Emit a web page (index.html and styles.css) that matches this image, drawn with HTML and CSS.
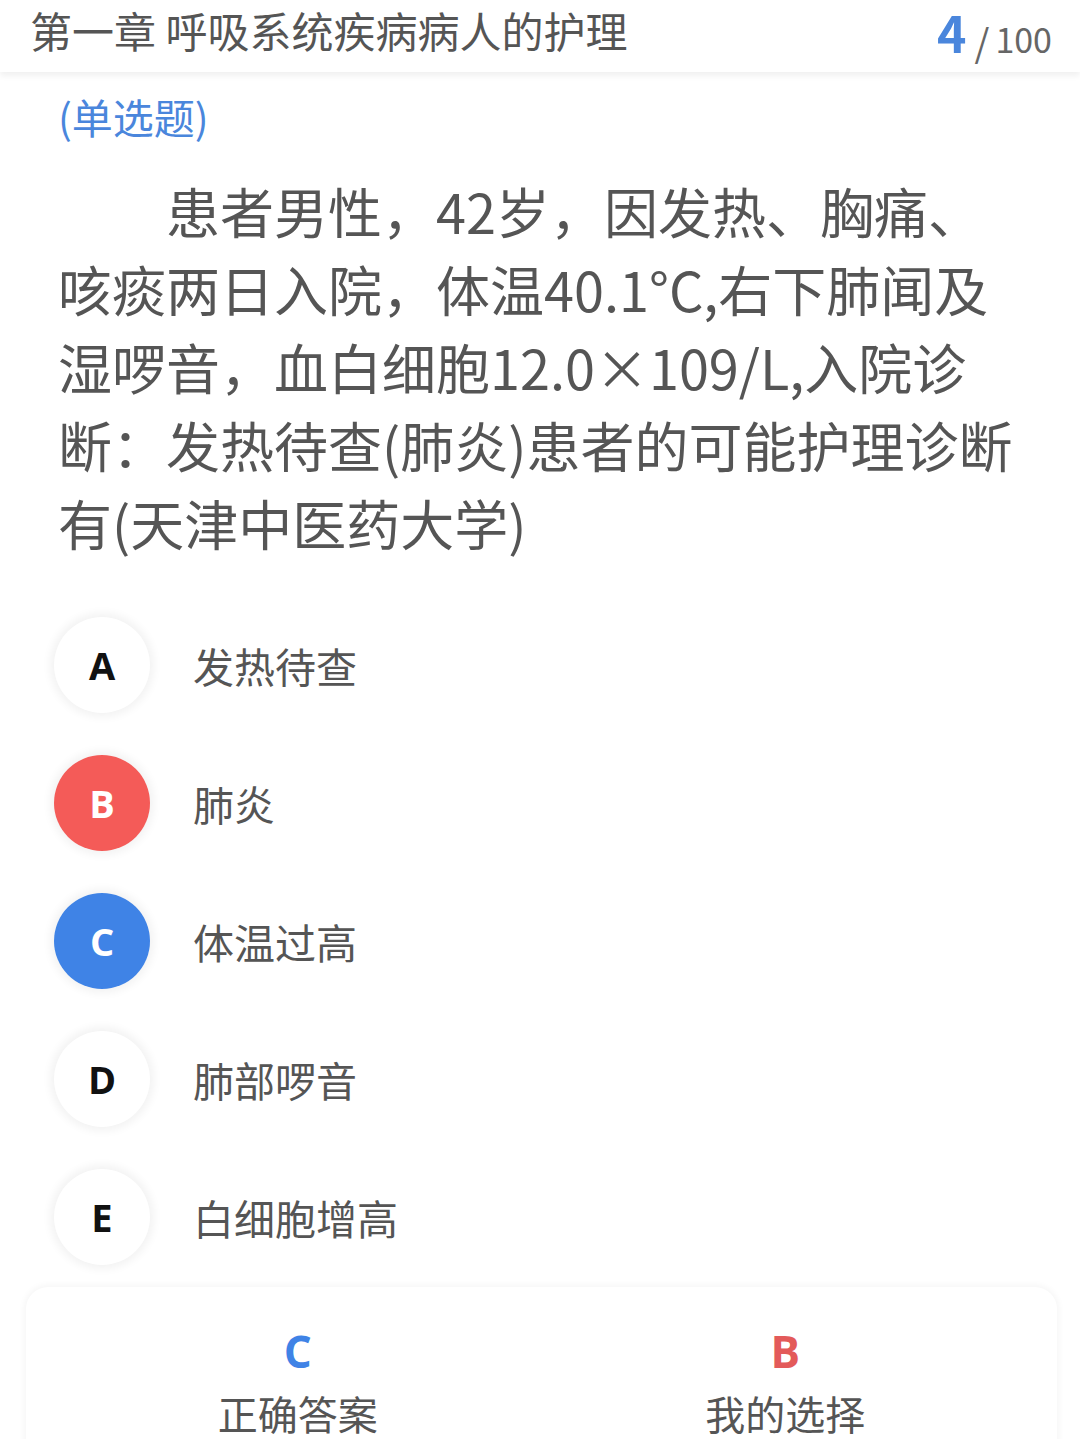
FILE: index.html
```html
<!DOCTYPE html>
<html lang="zh-CN">
<head>
<meta charset="utf-8">
<title>第一章 呼吸系统疾病病人的护理</title>
<link rel="stylesheet" href="styles.css">
</head>
<body>
<header class="topbar">
  <h1 class="chapter">第一章 呼吸系统疾病病人的护理</h1>
  <div class="progress"><span class="current">4</span><span class="sep">/</span><span class="total">100</span></div>
</header>
<main class="content">
  <div class="qtype">(单选题)</div>
  <p class="question">患者男性，42岁，因发热、胸痛、咳痰两日入院，体温40.1°C,右下肺闻及湿啰音，血白细胞12.0×109/L,入院诊断：发热待查(肺炎)患者的可能护理诊断有(天津中医药大学)</p>
  <ul class="options">
    <li class="option"><span class="badge">A</span><span class="opt-text">发热待查</span></li>
    <li class="option"><span class="badge badge-wrong">B</span><span class="opt-text">肺炎</span></li>
    <li class="option"><span class="badge badge-right">C</span><span class="opt-text">体温过高</span></li>
    <li class="option"><span class="badge">D</span><span class="opt-text">肺部啰音</span></li>
    <li class="option"><span class="badge">E</span><span class="opt-text">白细胞增高</span></li>
  </ul>
</main>
<section class="result">
  <div class="result-col">
    <div class="result-letter right">C</div>
    <div class="result-label">正确答案</div>
  </div>
  <div class="result-col">
    <div class="result-letter wrong">B</div>
    <div class="result-label">我的选择</div>
  </div>
</section>
</body>
</html>
```
FILE: styles.css
```css
html, body {
  margin: 0;
  padding: 0;
  background: #ffffff;
}
body {
  width: 1080px;
  height: 1439px;
  overflow: hidden;
  font-family: "Noto Sans CJK SC", "Noto Sans", sans-serif;
  color: #555555;
}
.topbar {
  height: 72px;
  display: flex;
  align-items: center;
  justify-content: space-between;
  padding: 0 28px 0 30px;
  box-sizing: border-box;
  box-shadow: 0 4px 6px rgba(0, 0, 0, 0.06);
  position: relative;
}
.chapter {
  margin: 0;
  font-size: 42px;
  font-weight: 400;
  color: #555555;
  line-height: 1.2;
  padding-bottom: 12px;
}
.progress {
  display: flex;
  align-items: baseline;
  line-height: 1.2;
  padding-bottom: 10px;
}
.current {
  font-size: 50px;
  font-weight: 700;
  color: #4a86dc;
}
.sep {
  font-size: 38px;
  color: #666;
  margin: 0 6px 0 8px;
  transform: translateY(4px);
}
.total {
  font-size: 34px;
  color: #666;
}
.content {
  padding: 0 58px 0 58px;
}
.qtype {
  margin-top: 16px;
  font-size: 41px;
  line-height: 56px;
  color: #4a86dc;
}
.question {
  margin: 28px 0 0 0;
  width: 970px;
  font-size: 54px;
  line-height: 78px;
  text-indent: 2em;
  color: #555555;
}
.options {
  list-style: none;
  margin: 55px 0 0 0;
  padding: 0;
  display: flex;
  flex-direction: column;
  gap: 42px;
}
.option {
  display: flex;
  align-items: center;
  height: 96px;
  margin-left: -4px;
}
.badge {
  width: 96px;
  height: 96px;
  border-radius: 50%;
  background: #ffffff;
  box-shadow: 0 0 8px 4px rgba(0, 0, 0, 0.05);
  display: flex;
  align-items: center;
  justify-content: center;
  font-family: "Open Sans", "Noto Sans", sans-serif;
  font-weight: 700;
  font-size: 38px;
  color: #111;
  flex: none;
}
.badge-wrong {
  background: #f45b58;
  color: #ffffff;
}
.badge-right {
  background: #3f83e6;
  color: #ffffff;
}
.opt-text {
  margin-left: 43px;
  font-size: 41px;
  color: #555555;
}
.result {
  position: absolute;
  left: 26px;
  top: 1287px;
  width: 1031px;
  height: 200px;
  box-sizing: border-box;
  border-radius: 22px;
  box-shadow: 0 0 6px 2px rgba(0, 0, 0, 0.04);
  display: grid;
  grid-template-columns: 1fr 1fr;
  padding: 0 28px;
  background: #fff;
}
.result-col {
  display: flex;
  flex-direction: column;
  align-items: center;
  padding-top: 36px;
}
.result-letter {
  font-family: "Open Sans", "Noto Sans", sans-serif;
  font-weight: 700;
  font-size: 44px;
  line-height: 56px;
}
.result-letter.right { color: #3f83e6; }
.result-letter.wrong { color: #e35a5a; }
.result-label {
  margin-top: 6px;
  font-size: 40px;
  line-height: 56px;
  color: #555555;
}
```
